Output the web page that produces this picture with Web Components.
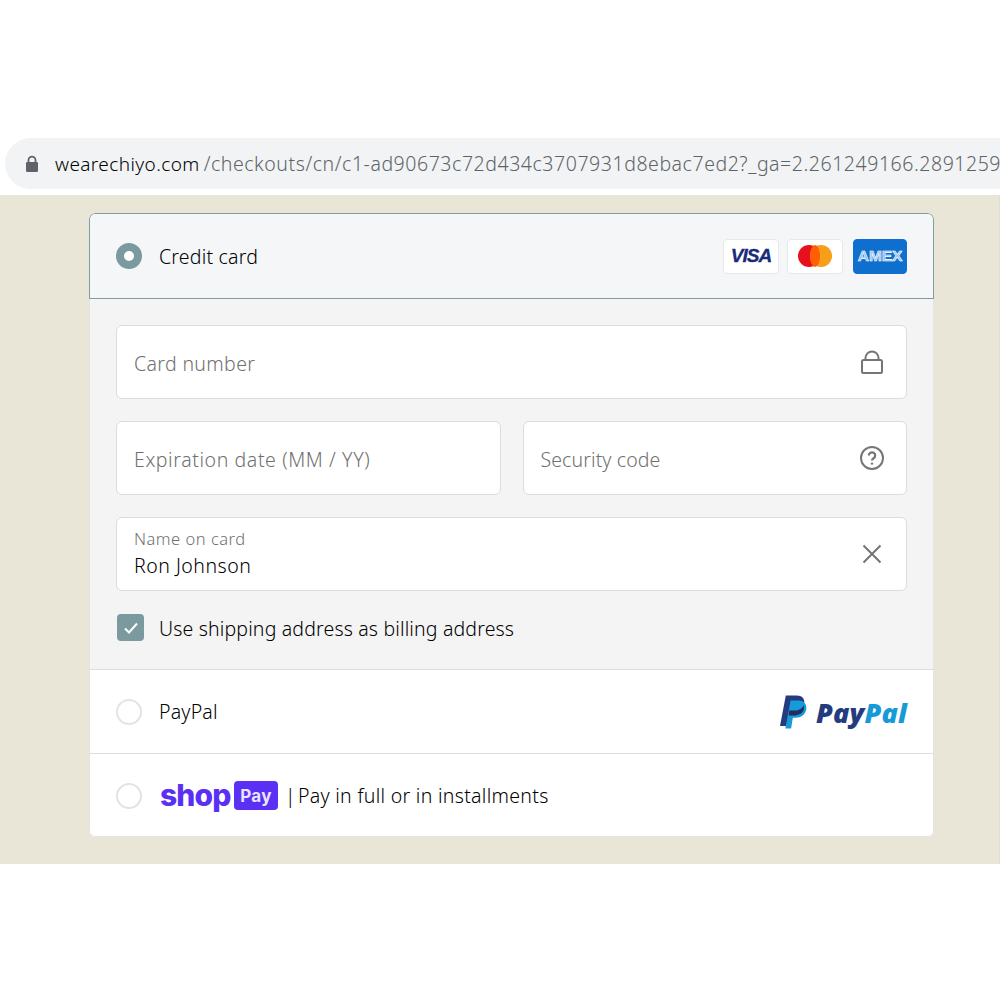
<!DOCTYPE html>
<html>
<head>
<meta charset="utf-8">
<style>
html, body { margin: 0; padding: 0; background: #fff; }
body { font-family: "Noto Sans", "Open Sans", sans-serif; width: 1000px; height: 1000px; overflow: hidden; }
</style>
</head>
<body>

<checkout-page>
  <address-bar slot="bar" host-name="wearechiyo.com" path="/checkouts/cn/c1-ad90673c72d434c3707931d8ebac7ed2?_ga=2.261249166.2891259"></address-bar>

  <pay-method selected>
    <span slot="label">Credit card</span>
    <card-logos slot="right"></card-logos>
    <div slot="body">
      <text-field placeholder="Card number" icon="lock" spacing="0.35px"></text-field>
      <field-row>
        <text-field placeholder="Expiration date (MM / YY)" spacing="0.6px"></text-field>
        <text-field placeholder="Security code" icon="help"></text-field>
      </field-row>
      <text-field label="Name on card" value="Ron Johnson" icon="close"></text-field>
      <check-row>Use shipping address as billing address</check-row>
    </div>
  </pay-method>

  <pay-method>
    <span slot="label">PayPal</span>
    <paypal-logo slot="right"></paypal-logo>
  </pay-method>

  <pay-method last>
    <shop-pay-label slot="label"></shop-pay-label>
  </pay-method>
</checkout-page>

<script>
class CheckoutPage extends HTMLElement {
    constructor() {
        super();
        this.attachShadow({mode: 'open'});
        this.shadowRoot.innerHTML = `
        <style>
        :host { display: block; padding-top: 138px; }
        .band { background: #e9e6d8; margin-top: 6px; padding: 18px 0 0 89px; border-right: 1px solid #e2dfd0; box-sizing: border-box; height: 669px; }
        .card { width: 845px; height: 624px; background: #fff; border-radius: 6px; overflow: hidden; }
        </style>
        <slot name="bar"></slot>
        <div class="band">
            <div class="card"><slot></slot></div>
        </div>
        `;
    }
}

class AddressBar extends HTMLElement {
    constructor() {
        super();
        this.attachShadow({mode: 'open'});
    }
    connectedCallback() {
        this.shadowRoot.innerHTML = `
        <style>
        :host { display: block; }
        .bar { height: 51px; margin-left: 5px; background: #f1f3f4; border-radius: 26px 0 0 26px; display: flex; align-items: center; padding-left: 20px; overflow: hidden; white-space: nowrap; font-size: 19.5px; }
        svg { width: 14px; height: 18px; flex: none; margin-right: 16px; }
        .host { color: #000; font-size: 19px; font-weight: 300; letter-spacing: 0.4px; }
        .path { color: #5f6368; font-weight: 300; letter-spacing: 0.55px; margin-left: 4px; }
        </style>
        <div class="bar">
            <svg viewBox="0 0 14 18"><path d="M3.5 8V5.2a3.5 3.5 0 0 1 7 0V8" fill="none" stroke="#5f6368" stroke-width="1.8"/><rect x="1" y="7" width="12" height="10" rx="1.2" fill="#5f6368"/></svg>
            <span class="host">${this.getAttribute('host-name')}</span><span class="path">${this.getAttribute('path')}</span>
        </div>
        `;
    }
}

class PayMethod extends HTMLElement {
    constructor() {
        super();
        this.attachShadow({mode: 'open'});
        this.shadowRoot.innerHTML = `
        <style>
        :host { display: block; color: #000; font-size: 19.5px; font-weight: 300; }
        .head { height: 83px; display: flex; align-items: center; padding: 0 27px; background: #fff; box-shadow: inset 1px 0 0 #e3e3e3, inset -1px 0 0 #e3e3e3; border-bottom: 1px solid #dedede; }
        :host([selected]) .head { height: 86px; background: #f4f6f8; box-shadow: inset 0 0 0 1px #7f9ea3; border-radius: 6px 6px 0 0; border-bottom: 0; }
        :host([last]) .head { border-radius: 0 0 6px 6px; box-shadow: inset 1px 0 0 #e3e3e3, inset -1px 0 0 #e3e3e3, inset 0 -1px 0 #e3e3e3; border-bottom: 0; }
        .radio { width: 26px; height: 26px; border-radius: 50%; border: 2px solid #e3e3e3; box-sizing: border-box; background: #fff; flex: none; margin-right: 17px; }
        :host([selected]) .radio { border: 8.5px solid #7a9aa0; }
        .label { flex: 1; display: flex; align-items: center; letter-spacing: 0.2px; }
        .body { display: none; }
        :host([selected]) .body { display: block; background: #f4f4f4; padding: 26px 27px 0 27px; height: 371px; box-sizing: border-box; border-bottom: 1px solid #dedede; box-shadow: inset 1px 0 0 #e3e3e3, inset -1px 0 0 #e3e3e3; }
        </style>
        <div class="head">
            <div class="radio"></div>
            <div class="label"><slot name="label"></slot></div>
            <slot name="right"></slot>
        </div>
        <div class="body"><slot name="body"></slot></div>
        `;
    }
}

class TextField extends HTMLElement {
    constructor() {
        super();
        this.attachShadow({mode: 'open'});
    }
    icon(name) {
        // icons for the right side of a field
        if (name == 'lock') {
            return `<svg width="24" height="26" viewBox="0 0 24 26" fill="none" stroke="#757575" stroke-width="2"><rect x="2" y="11" width="20" height="13" rx="1.500"/><path d="M5.500 11V9a6.500 6.500 0 0 1 13 0v2"/></svg>`;
        }
        if (name == 'help') {
            return `<svg width="26" height="26" viewBox="0 0 26 26" fill="none" stroke="#757575" stroke-width="2"><circle cx="13" cy="13" r="11"/><path d="M9.800 10.500a3.200 3.200 0 1 1 4.800 2.800c-1 .6-1.600 1.200-1.600 2.200" stroke-width="2.200"/><circle cx="13" cy="18.600" r="1.200" fill="#757575" stroke="none"/></svg>`;
        }
        if (name == 'close') {
            return `<svg width="22" height="22" viewBox="0 0 22 22" fill="none" stroke="#757575" stroke-width="2"><path d="M2.500 2.500l17 17M19.500 2.500l-17 17"/></svg>`;
        }
        return '';
    }
    connectedCallback() {
        const label = this.getAttribute('label');
        const value = this.getAttribute('value');
        const placeholder = this.getAttribute('placeholder');
        let text = `<span class="ph">${placeholder}</span>`;
        if (label) {
            text = `<span class="small">${label}</span><span class="val">${value}</span>`;
        }
        const iconName = this.getAttribute('icon');
        const pad = iconName == 'close' ? 23 : iconName == 'help' ? 21 : 22;
        this.shadowRoot.innerHTML = `
        <style>
        :host { display: block; flex: 1; margin-bottom: 22px; }
        .box { height: 74px; box-sizing: border-box; background: #fff; border: 1px solid #dcdcdc; border-radius: 6px; display: flex; align-items: center; padding: 0 ${pad}px 0 17px; }
        .text { flex: 1; display: flex; flex-direction: column; padding-top: 2px; }
        .ph { color: #707070; font-size: 19.5px; font-weight: 300; letter-spacing: ${this.getAttribute('spacing') || '0.1px'}; }
        .small { color: #707070; font-size: 16.5px; font-weight: 300; line-height: 20px; margin-top: -2px; letter-spacing: 0.5px; }
        .val { color: #000; font-size: 19.5px; font-weight: 300; line-height: 28px; margin-top: 3px; letter-spacing: 0.5px; }
        svg { display: block; flex: none; }
        </style>
        <div class="box">
            <div class="text">${text}</div>
            ${this.icon(iconName)}
        </div>
        `;
    }
}

class FieldRow extends HTMLElement {
    constructor() {
        super();
        this.attachShadow({mode: 'open'});
        this.shadowRoot.innerHTML = `
        <style>
        :host { display: flex; gap: 22px; }
        </style>
        <slot></slot>
        `;
    }
}

class CheckRow extends HTMLElement {
    constructor() {
        super();
        this.attachShadow({mode: 'open'});
        this.shadowRoot.innerHTML = `
        <style>
        :host { display: flex; align-items: center; margin-top: 2px; font-size: 19.5px; font-weight: 300; color: #000; letter-spacing: 0.16px; }
        .box { width: 27px; height: 27px; margin: 0 15px 0 1px; background: #7a9aa0; border-radius: 4px; display: flex; align-items: center; justify-content: center; flex: none; }
        .txt { padding-top: 2px; }
        </style>
        <div class="box"><svg width="16" height="14" viewBox="0 0 16 14" fill="none" stroke="#fff" stroke-width="2"><path d="M2 7.500l4 4 8-9"/></svg></div>
        <div class="txt"><slot></slot></div>
        `;
    }
}

class CardLogos extends HTMLElement {
    constructor() {
        super();
        this.attachShadow({mode: 'open'});
        this.shadowRoot.innerHTML = `
        <style>
        :host { display: flex; gap: 8px; }
        .logo { width: 56px; height: 35px; box-sizing: border-box; background: #fff; border: 1px solid #e8e8e8; border-radius: 4px; display: flex; align-items: center; justify-content: center; }
        .visa { color: #1a2a78; font: italic bold 19px "Liberation Sans", sans-serif; letter-spacing: -0.9px; -webkit-text-stroke: 0.3px #1a2a78; }
        .amex { background: #0f6fce; border-color: #0f6fce; width: 54px; margin-left: 2px; font: bold 15.5px "Liberation Sans", sans-serif; letter-spacing: -0.1px; }
        .amex span { color: #8fbdec; -webkit-text-stroke: 0.6px #fff; }
        .dots { position: relative; width: 34px; height: 22px; }
        .dots i { position: absolute; top: 0; width: 22px; height: 22px; border-radius: 50%; }
        .dots .red { left: 0; background: #e8101c; }
        .dots .yellow { left: 12px; background: #f79e1b; }
        .dots .mid { left: 12px; width: 10px; background: #ff5f00; }
        </style>
        <div class="logo"><span class="visa">VISA</span></div>
        <div class="logo"><div class="dots"><i class="red"></i><i class="yellow"></i><i class="mid"></i></div></div>
        <div class="logo amex"><span>AMEX</span></div>
        `;
    }
}

class PaypalLogo extends HTMLElement {
    constructor() {
        super();
        this.attachShadow({mode: 'open'});
        this.shadowRoot.innerHTML = `
        <style>
        :host { display: flex; align-items: center; gap: 8px; }
        svg { display: block; }
        .word { font: italic 800 27px "Open Sans", "Liberation Sans", sans-serif; line-height: 30px; margin-top: 3px; letter-spacing: 0.2px; }
        .a { color: #253b80; }
        .b { color: #179bd7; }
        </style>
        <svg width="28" height="34" viewBox="0 0 29 34">
            <path d="M6 0h11c6 0 9 3.500 8 9-1 6.500-6 10-12 10H9l-2 12.500H0z" fill="#253b80"/>
            <path d="M11 5h8c5 0 9 3 8.300 9-1 6-5.500 9-11 9h-3L11.500 34H5.500z" fill="#179bd7"/>
            <path d="M9.600 15.500h6c3.600 0 7.400-2 9-5.500.3 1.300.4 2.700.2 4-1 4.200-4.800 6.500-9 6.500H9z" fill="#222d65"/>
        </svg>
        <div class="word"><span class="a">Pay</span><span class="b">Pal</span></div>
        `;
    }
}

class ShopPayLabel extends HTMLElement {
    constructor() {
        super();
        this.attachShadow({mode: 'open'});
        this.shadowRoot.innerHTML = `
        <style>
        :host { display: flex; align-items: center; font-size: 19.5px; font-weight: 300; color: #000; margin-left: 1px; letter-spacing: 0.3px; }
        .shop { color: #5a31f4; font: 800 30px Inter, Lato, sans-serif; line-height: 30px; letter-spacing: -0.9px; margin-top: -2px; width: 72px; }
        .pay { background: #5a31f4; color: #e9e4ff; font: bold 17px Inter, "Noto Sans", sans-serif; width: 44px; height: 29px; border-radius: 4px; display: flex; align-items: center; justify-content: center; margin: 0 7px 0 2px; }
        .pipe { margin-right: 2px; }
        </style>
        <span class="shop">shop</span><span class="pay">Pay</span><span class="pipe">|</span><span>Pay in full or in installments</span>
        `;
    }
}

customElements.define('checkout-page', CheckoutPage);
customElements.define('address-bar', AddressBar);
customElements.define('pay-method', PayMethod);
customElements.define('text-field', TextField);
customElements.define('field-row', FieldRow);
customElements.define('check-row', CheckRow);
customElements.define('card-logos', CardLogos);
customElements.define('paypal-logo', PaypalLogo);
customElements.define('shop-pay-label', ShopPayLabel);
</script>
</body>
</html>
